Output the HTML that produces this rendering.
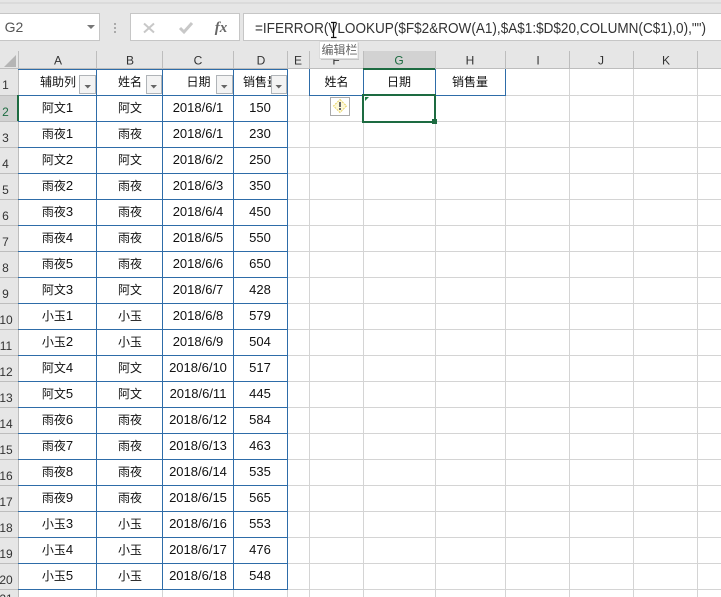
<!DOCTYPE html>
<html><head><meta charset="utf-8"><style>
html,body{margin:0;padding:0;width:721px;height:597px;overflow:hidden;background:#fff}
svg{display:block}
text{font-family:"Liberation Sans","Noto Sans CJK SC",sans-serif;font-size:12px;fill:#111;text-anchor:middle}
.h text{fill:#333;font-size:12px}
.n,.a tspan{font-size:13px}
</style></head><body>
<svg width="721" height="597" viewBox="0 0 721 597" xmlns="http://www.w3.org/2000/svg">
<rect x="0" y="0" width="721" height="51" fill="#e6e6e6"/>
<rect x="0" y="2.5" width="721" height="1" fill="#d0d0d0"/>
<rect x="-2" y="13.5" width="101.5" height="27" fill="#fff" stroke="#c6c6c6"/>
<text x="14" y="32" style="font-size:14px;fill:#555">G2</text>
<path d="M87 25h8l-4 4z" fill="#777"/>
<rect x="114" y="23" width="2" height="2" fill="#aaa"/><rect x="114" y="27" width="2" height="2" fill="#aaa"/><rect x="114" y="31" width="2" height="2" fill="#aaa"/>
<rect x="130.500" y="13.5" width="109" height="27" fill="#fff" stroke="#c6c6c6"/>
<path d="M144 23.500l10 9M154 23.500l-10 9" stroke="#c8c8c8" stroke-width="2" fill="none"/>
<path d="M180 28l4 4 8-9" stroke="#c8c8c8" stroke-width="3" fill="none"/>
<text x="221" y="32" style="font-family:'Liberation Serif',serif;font-style:italic;font-weight:bold;font-size:15px;fill:#666">fx</text>
<rect x="243.500" y="13.5" width="490" height="27" fill="#fff" stroke="#c6c6c6"/>
<text x="255" y="33" style="text-anchor:start;font-size:14.3px;fill:#333" textLength="451" lengthAdjust="spacingAndGlyphs">=IFERROR(VLOOKUP($F$2&amp;ROW(A1),$A$1:$D$20,COLUMN(C$1),0),"")</text>

<!-- headers -->
<rect x="0" y="51" width="721" height="18" fill="#e6e6e6"/>
<rect x="0" y="69" width="18" height="528" fill="#e6e6e6"/>
<rect x="363" y="51" width="72" height="18" fill="#d2d2d2"/>
<rect x="0" y="95" width="18" height="26" fill="#d2d2d2"/>
<path d="M16 55v12H4z" fill="#b5b5b5"/>
<path d="M18.500 51V597M96.500 51v18M162.500 51v18M233.500 51v18M287.500 51v18M309.500 51v18M363.500 51v18M435.500 51v18M505.500 51v18M569.500 51v18M633.500 51v18M697.500 51v18" stroke="#bdbdbd" fill="none"/>
<path d="M0 68.500H721M0 95.500h18M0 121.500h18M0 147.500h18M0 173.500h18M0 199.500h18M0 225.500h18M0 251.500h18M0 277.500h18M0 303.500h18M0 329.500h18M0 355.500h18M0 381.500h18M0 407.500h18M0 433.500h18M0 459.500h18M0 485.500h18M0 511.500h18M0 537.500h18M0 563.500h18M0 589.500h18" stroke="#bdbdbd" fill="none"/>
<g class="h">
<text x="58" y="64.500">A</text><text x="130" y="64.500">B</text><text x="198" y="64.500">C</text><text x="261" y="64.500">D</text><text x="298" y="64.500">E</text><text x="336" y="64.500">F</text><text x="399" y="64.500" style="fill:#1d6b41">G</text><text x="470" y="64.500">H</text><text x="538" y="64.500">I</text><text x="601" y="64.500">J</text><text x="666" y="64.500">K</text>
</g>
<g class="h">
<text x="5.500" y="89">1</text><text x="5.500" y="116" style="fill:#1d6b41">2</text><text x="5.500" y="142">3</text><text x="5.500" y="168">4</text><text x="5.500" y="194">5</text><text x="5.500" y="220">6</text><text x="5.500" y="246">7</text><text x="5.500" y="272">8</text><text x="5.500" y="298">9</text><text x="6" y="324">10</text><text x="6" y="350">11</text><text x="6" y="376">12</text><text x="6" y="402">13</text><text x="6" y="428">14</text><text x="6" y="454">15</text><text x="6" y="480">16</text><text x="6" y="506">17</text><text x="6" y="532">18</text><text x="6" y="558">19</text><text x="6" y="584">20</text><text x="6" y="603">21</text>
</g>

<!-- grid -->
<path d="M18 95.500H721M18 121.500H721M18 147.500H721M18 173.500H721M18 199.500H721M18 225.500H721M18 251.500H721M18 277.500H721M18 303.500H721M18 329.500H721M18 355.500H721M18 381.500H721M18 407.500H721M18 433.500H721M18 459.500H721M18 485.500H721M18 511.500H721M18 537.500H721M18 563.500H721M18 589.500H721" stroke="#d4d4d4" fill="none"/>
<path d="M96.500 589V597M162.500 589V597M233.500 589V597M287.500 589V597M309.500 69V597M363.500 69V597M435.500 69V597M505.500 69V597M569.500 69V597M633.500 69V597M697.500 69V597" stroke="#d4d4d4" fill="none"/>

<!-- blue borders -->
<path d="M18 69.500H287.500M18 95.500H287.500M18 121.500H287.500M18 147.500H287.500M18 173.500H287.500M18 199.500H287.500M18 225.500H287.500M18 251.500H287.500M18 277.500H287.500M18 303.500H287.500M18 329.500H287.500M18 355.500H287.500M18 381.500H287.500M18 407.500H287.500M18 433.500H287.500M18 459.500H287.500M18 485.500H287.500M18 511.500H287.500M18 537.500H287.500M18 563.500H287.500M18 589.500H287.500M96.500 69V590M162.500 69V590M233.500 69V590M287.500 69V590" stroke="#2e6ca8" fill="none"/>
<path d="M309.500 69V95.500H505.500V69M363.500 69V95.500M435.500 69V95.500" stroke="#2e6ca8" fill="none"/>

<!-- header row -->
<g class="a">
<text x="58" y="86">辅助列</text><text x="130" y="86">姓名</text><text x="198.500" y="86">日期</text><text x="261" y="86">销售量</text>
<text x="336.500" y="86">姓名</text><text x="399" y="86">日期</text><text x="470" y="86">销售量</text>
</g>
<!-- filter buttons -->
<g fill="#f3f3f3" stroke="#b0b4b8">
<rect x="79.500" y="75.500" width="16" height="18"/><rect x="146.500" y="75.500" width="15" height="18"/><rect x="216.500" y="75.500" width="16" height="18"/><rect x="271.500" y="75.500" width="15" height="18"/>
</g>
<path d="M84.500 85h6.500l-3.250 3.500zM150.500 85h6.500l-3.250 3.500zM221 85h6.500l-3.250 3.500zM275.500 85h6.500l-3.250 3.500z" fill="#666"/>

<!-- data -->
<g class="a">
<text x="57.500" y="112">阿文<tspan>1</tspan></text><text x="130" y="112">阿文</text><text class="n" x="198" y="112">2018/6/1</text><text class="n" x="260" y="112">150</text>
<text x="57.500" y="138">雨夜<tspan>1</tspan></text><text x="130" y="138">雨夜</text><text class="n" x="198" y="138">2018/6/1</text><text class="n" x="260" y="138">230</text>
<text x="57.500" y="164">阿文<tspan>2</tspan></text><text x="130" y="164">阿文</text><text class="n" x="198" y="164">2018/6/2</text><text class="n" x="260" y="164">250</text>
<text x="57.500" y="190">雨夜<tspan>2</tspan></text><text x="130" y="190">雨夜</text><text class="n" x="198" y="190">2018/6/3</text><text class="n" x="260" y="190">350</text>
<text x="57.500" y="216">雨夜<tspan>3</tspan></text><text x="130" y="216">雨夜</text><text class="n" x="198" y="216">2018/6/4</text><text class="n" x="260" y="216">450</text>
<text x="57.500" y="242">雨夜<tspan>4</tspan></text><text x="130" y="242">雨夜</text><text class="n" x="198" y="242">2018/6/5</text><text class="n" x="260" y="242">550</text>
<text x="57.500" y="268">雨夜<tspan>5</tspan></text><text x="130" y="268">雨夜</text><text class="n" x="198" y="268">2018/6/6</text><text class="n" x="260" y="268">650</text>
<text x="57.500" y="294">阿文<tspan>3</tspan></text><text x="130" y="294">阿文</text><text class="n" x="198" y="294">2018/6/7</text><text class="n" x="260" y="294">428</text>
<text x="57.500" y="320">小玉<tspan>1</tspan></text><text x="130" y="320">小玉</text><text class="n" x="198" y="320">2018/6/8</text><text class="n" x="260" y="320">579</text>
<text x="57.500" y="346">小玉<tspan>2</tspan></text><text x="130" y="346">小玉</text><text class="n" x="198" y="346">2018/6/9</text><text class="n" x="260" y="346">504</text>
<text x="57.500" y="372">阿文<tspan>4</tspan></text><text x="130" y="372">阿文</text><text class="n" x="198" y="372">2018/6/10</text><text class="n" x="260" y="372">517</text>
<text x="57.500" y="398">阿文<tspan>5</tspan></text><text x="130" y="398">阿文</text><text class="n" x="198" y="398">2018/6/11</text><text class="n" x="260" y="398">445</text>
<text x="57.500" y="424">雨夜<tspan>6</tspan></text><text x="130" y="424">雨夜</text><text class="n" x="198" y="424">2018/6/12</text><text class="n" x="260" y="424">584</text>
<text x="57.500" y="450">雨夜<tspan>7</tspan></text><text x="130" y="450">雨夜</text><text class="n" x="198" y="450">2018/6/13</text><text class="n" x="260" y="450">463</text>
<text x="57.500" y="476">雨夜<tspan>8</tspan></text><text x="130" y="476">雨夜</text><text class="n" x="198" y="476">2018/6/14</text><text class="n" x="260" y="476">535</text>
<text x="57.500" y="502">雨夜<tspan>9</tspan></text><text x="130" y="502">雨夜</text><text class="n" x="198" y="502">2018/6/15</text><text class="n" x="260" y="502">565</text>
<text x="57.500" y="528">小玉<tspan>3</tspan></text><text x="130" y="528">小玉</text><text class="n" x="198" y="528">2018/6/16</text><text class="n" x="260" y="528">553</text>
<text x="57.500" y="554">小玉<tspan>4</tspan></text><text x="130" y="554">小玉</text><text class="n" x="198" y="554">2018/6/17</text><text class="n" x="260" y="554">476</text>
<text x="57.500" y="580">小玉<tspan>5</tspan></text><text x="130" y="580">小玉</text><text class="n" x="198" y="580">2018/6/18</text><text class="n" x="260" y="580">548</text>
</g>

<!-- selection -->
<rect x="17" y="95" width="2" height="26" fill="#1d6b41"/>
<rect x="363" y="68" width="72" height="2" fill="#1d6b41"/>
<rect x="363" y="95" width="72" height="27" fill="#fff" stroke="#1d6b41" stroke-width="2"/>
<rect x="432" y="119" width="5" height="5" fill="#1d6b41"/>
<path d="M365 97h4l-4 4z" fill="#1d7a41"/>

<!-- warning -->
<rect x="330.500" y="97.500" width="19" height="18" fill="#fff" stroke="#aaa"/>
<path d="M340 99.500l6.500 6.500-6.500 6.500-6.500-6.500z" fill="#fdf8d8" stroke="#e8d468" stroke-dasharray="2 1"/>
<rect x="339" y="102" width="2" height="5" fill="#666"/><rect x="339" y="108" width="2" height="2" fill="#666"/>

<!-- cursor -->
<path d="M331 22.500h5.500M331 37.500h5.500M333.500 23v14" stroke="#111" stroke-width="1.200" fill="none"/>

<!-- tooltip -->
<rect x="321" y="43" width="38" height="17" fill="#aaa" opacity=".55"/>
<rect x="319.500" y="41.500" width="38.500" height="17" fill="#fff" stroke="#dcdcdc"/>
<text x="339.500" y="54" style="fill:#666">编辑栏</text>
</svg>
</body></html>
